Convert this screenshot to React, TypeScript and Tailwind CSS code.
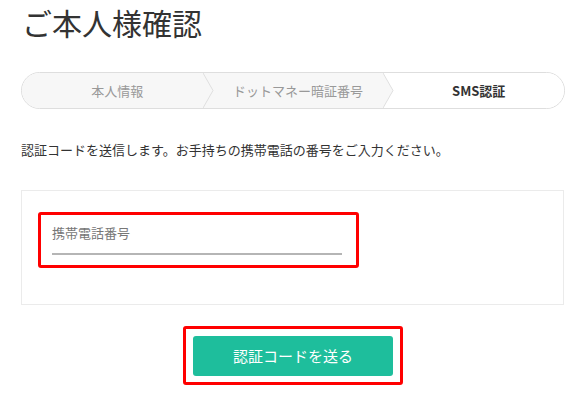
const font = "font-['Meiryo','Noto_Sans_CJK_JP',sans-serif]";

interface Step {
  label: string;
  active: boolean;
}

const steps: Step[] = [
  { label: "本人情報", active: false },
  { label: "ドットマネー暗証番号", active: false },
  { label: "SMS認証", active: true },
];

const Chevron = () => (
  <svg
    className="absolute left-full top-0 z-10 h-full w-[12px]"
    viewBox="0 0 12 36"
    preserveAspectRatio="none"
  >
    <polygon points="0,0 10,18 0,36" fill="#f7f7f7" />
    <polyline points="0,0 10,18 0,36" fill="none" stroke="#dedede" strokeWidth="1" />
  </svg>
);

const Stepper = () => (
  <div className="flex h-[37px] w-[544px] overflow-hidden rounded-full border border-[#dedede]">
    {steps.map((step, i) => (
      <div
        key={step.label}
        className={`relative flex flex-1 items-center justify-center pl-[10px] text-[13px] ${
          step.active ? "bg-white font-bold text-[#333]" : "bg-[#f7f7f7] text-[#999]"
        }`}
      >
        {step.label}
        {i < steps.length - 1 && <Chevron />}
      </div>
    ))}
  </div>
);

export default function App() {
  return (
    <div className={`${font} min-h-[408px] w-[581px] bg-white pl-[21px] text-[#333]`}>
      <div className="w-[544px]">
        <h1 className="pl-px text-[30px] leading-[45px] font-normal">ご本人様確認</h1>

        <div className="mt-[27px]">
          <Stepper />
        </div>

        <p className="mt-[31px] text-[13px] leading-[20px]">
          認証コードを送信します。お手持ちの携帯電話の番号をご入力ください。
        </p>

        <div className="mt-[30px] w-[543px] border border-[#ebebeb] pt-[21px] pb-[36px] pl-[16px]">
          <div className="w-[321px] rounded-[3px] border-[3px] border-[#ff0000] pt-[8px] pr-[14px] pb-[10px] pl-[11px]">
            <div className="text-[13px] leading-[20px] text-[#777]">携帯電話番号</div>
            <div className="mt-[10px] h-[2px] bg-[#b5b5b5]" />
          </div>
        </div>

        <div className="mt-[21px] flex justify-center">
          <div className="rounded-[3px] border-[3px] border-[#ff0000] pt-[7px] pr-[7px] pb-[6px] pl-[7px]">
            <button className="flex h-[40px] w-[200px] items-center justify-center rounded-[3px] bg-[#1ebe9c] text-[15px] text-white">
              認証コードを送る
            </button>
          </div>
        </div>
      </div>
    </div>
  );
}
